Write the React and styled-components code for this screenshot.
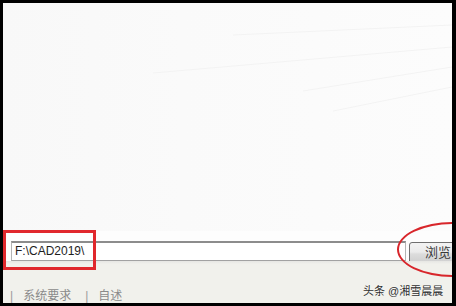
import styled, { createGlobalStyle } from 'styled-components';

const Global = createGlobalStyle`
    html, body {
        margin: 0;
        padding: 0;
        background: #000;
    }
`;

const Frame = styled.div`
    width: 456px;
    height: 306px;
    box-sizing: border-box;
    padding: 3px 4px 3px 3px;
    background: #000;
`;

const Window = styled.div`
    position: relative;
    display: flex;
    flex-direction: column;
    height: 100%;
    overflow: hidden;
    background: #f1f1ec;
    font-family: 'Liberation Sans', 'Noto Sans CJK SC', sans-serif;
`;

const Hero = styled.div`
    height: 228px;
    flex-shrink: 0;
    background: linear-gradient(90deg, #f8f8f8 0%, #fafafa 40%, #fcfcfc 100%);
`;

const PathRow = styled.div`
    display: flex;
    align-items: flex-start;
    gap: 3px;
    height: 30px;
    box-sizing: border-box;
    padding: 10px 0 0 8px;
    background: #fdfdfd;
`;

const PathInput = styled.div`
    flex-shrink: 0;
    width: 395px;
    height: 20px;
    box-sizing: border-box;
    padding-left: 3px;
    border-top: 2px solid #8c8c8c;
    border-left: 1px solid #b4b4b4;
    border-right: 1px solid #b4b4b4;
    border-bottom: 1px solid #a2a2a2;
    background: #fff;
    color: #1e1e1e;
    font-size: 12px;
    line-height: 17px;
`;

const Button = styled.div`
    flex-shrink: 0;
    width: 75px;
    height: 22px;
    margin-top: 1px;
    box-sizing: border-box;
    padding-left: 15px;
    border: 1px solid #6f6f6f;
    border-radius: 3px;
    background: linear-gradient(#f3f3f3 0%, #ebebeb 45%, #dcdcdc 55%, #cfcfcf 100%);
    color: #3a3a3a;
    font-size: 13px;
    line-height: 20px;
`;

const Band = styled.div`
    height: 12px;
    background: linear-gradient(#e6e6e3, #f1f1ec);
`;

const Footer = styled.div`
    display: flex;
    align-items: flex-start;
    flex: 1;
    padding: 25px 0 0 7px;
    color: #8a8a8a;
    font-size: 12px;
    line-height: 14px;
`;

const Sep = styled.span`
    color: #9a9a9a;
    margin-right: 10px;
`;

const Link = styled.span`
    margin-right: 14px;
`;

const Watermark = styled.div`
    position: absolute;
    left: 360px;
    top: 282px;
    color: #2e2e2e;
    font-size: 11px;
    line-height: 13px;
    text-shadow: 0 0 2px #fff;
`;

const MarkBox = styled.div`
    position: absolute;
    left: 0;
    top: 227px;
    width: 93px;
    height: 40px;
    box-sizing: border-box;
    border: 3px solid #e0272c;
`;

const MarkRing = styled.div`
    position: absolute;
    left: 394px;
    top: 219px;
    width: 112px;
    height: 55px;
    box-sizing: border-box;
    border: 2.5px solid #d8262b;
    border-radius: 50%;
`;

const Streaks = () => (
    <svg width="449" height="228" viewBox="0 0 449 228" style={{ display: 'block' }}>
        <g stroke="#f3f3f3" strokeWidth="1" fill="none">
            <path d="M449 22 L230 32" />
            <path d="M449 44 L150 70" />
            <path d="M449 64 L300 88" />
            <path d="M449 84 L330 108" />
        </g>
    </svg>
);

const App = () => (
    <Frame>
        <Global />
        <Window>
            <Hero>
                <Streaks />
            </Hero>
            <PathRow>
                <PathInput>F:\CAD2019\</PathInput>
                <Button>浏览</Button>
            </PathRow>
            <Band />
            <Footer>
                <Sep>|</Sep>
                <Link>系统要求</Link>
                <Sep>|</Sep>
                <Link>自述</Link>
            </Footer>
            <MarkBox />
            <MarkRing />
            <Watermark>头条 @湘雪晨晨</Watermark>
        </Window>
    </Frame>
);

export default App;
